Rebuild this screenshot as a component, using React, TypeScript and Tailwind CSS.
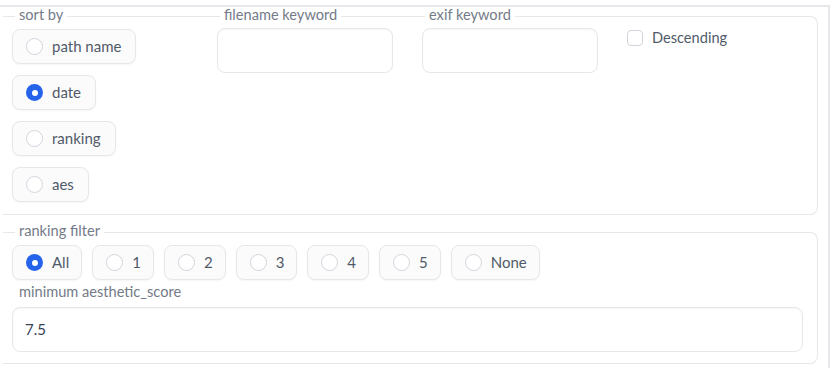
import React from "react";

const sortOptions = ["path name", "date", "ranking", "aes"];
const rankOptions = ["All", "1", "2", "3", "4", "5", "None"];

function Radio({ label, checked, tight }: { label: string; checked?: boolean; tight?: boolean }) {
  return (
    <label
      className={
        "flex h-[35px] w-fit items-center gap-[9px] rounded-lg border border-[#e5e7eb] bg-[#fbfbfc] pl-[13px] shadow-[0_1px_2px_rgba(0,0,0,0.04)] " +
        (tight ? "pr-[12px]" : "pr-[14px]")
      }
    >
      {checked ? (
        <span className="flex h-[17px] w-[17px] items-center justify-center rounded-full bg-[#2563eb]">
          <span className="h-[6px] w-[6px] rounded-full bg-white" />
        </span>
      ) : (
        <span className="h-[17px] w-[17px] rounded-full border border-[#d1d5db] bg-white" />
      )}
      <span className="text-[15px] leading-none text-[#505a68]">{label}</span>
    </label>
  );
}

function Legend({ children }: { children: React.ReactNode }) {
  return (
    <div className="-mt-[10px] ml-[3px] w-fit bg-white px-[4px] text-[14.6px] leading-[16px] text-[#737b88]">
      {children}
    </div>
  );
}

function TextBox({ value, className }: { value?: string; className?: string }) {
  return (
    <div
      className={
        "flex h-[45px] items-center rounded-lg border border-[#e5e7eb] bg-white px-[12px] text-[15px] text-[#374151] shadow-[inset_0_1px_2px_rgba(0,0,0,0.04)] " +
        (className || "")
      }
    >
      {value}
    </div>
  );
}

export default function App() {
  return (
    <div className="h-[368px] w-[833px] overflow-hidden bg-white font-['Lato',sans-serif]">
      <div className="mt-[5px] w-[830px] border-t-2 border-r-2 border-[#e7e7ec] pb-[10px] pl-[3px] pr-[10px] pt-[9px]">
        {/* sort / keywords row */}
        <div className="rounded-r-lg border-y border-r border-[#e5e7eb] pb-[12px] pl-[9px] pr-[15px]">
          <div className="grid grid-cols-[176px_176px_176px_176px] gap-x-[29px]">
            <div className="flex flex-col">
              <Legend>sort by</Legend>
              <div className="mt-[6px] flex flex-col gap-[11px]">
                {sortOptions.map((o) => (
                  <Radio key={o} label={o} checked={o === "date"} />
                ))}
              </div>
            </div>
            <div className="flex flex-col">
              <Legend>filename keyword</Legend>
              <TextBox className="mt-[5px]" />
            </div>
            <div className="flex flex-col">
              <Legend>exif keyword</Legend>
              <TextBox className="mt-[5px]" />
            </div>
            <div className="flex items-center gap-[9px] self-start pt-[13px]">
              <span className="h-[16px] w-[16px] rounded-[4px] border border-[#d1d5db] bg-white" />
              <span className="text-[14.6px] leading-none text-[#505a68]">Descending</span>
            </div>
          </div>
        </div>

        {/* ranking filter row */}
        <div className="mt-[17px] rounded-r-lg border-y border-r border-[#e5e7eb] pb-[11px] pl-[9px] pr-[14px]">
          <Legend>ranking filter</Legend>
          <div className="mt-[6px] flex gap-[10px]">
            {rankOptions.map((o) => (
              <Radio key={o} label={o} checked={o === "All"} tight />
            ))}
          </div>
          <div className="ml-[7px] mt-[4px] text-[14.6px] leading-[16px] text-[#737b88]">
            minimum aesthetic_score
          </div>
          <TextBox value="7.5" className="mt-[7px]" />
        </div>
      </div>
    </div>
  );
}
